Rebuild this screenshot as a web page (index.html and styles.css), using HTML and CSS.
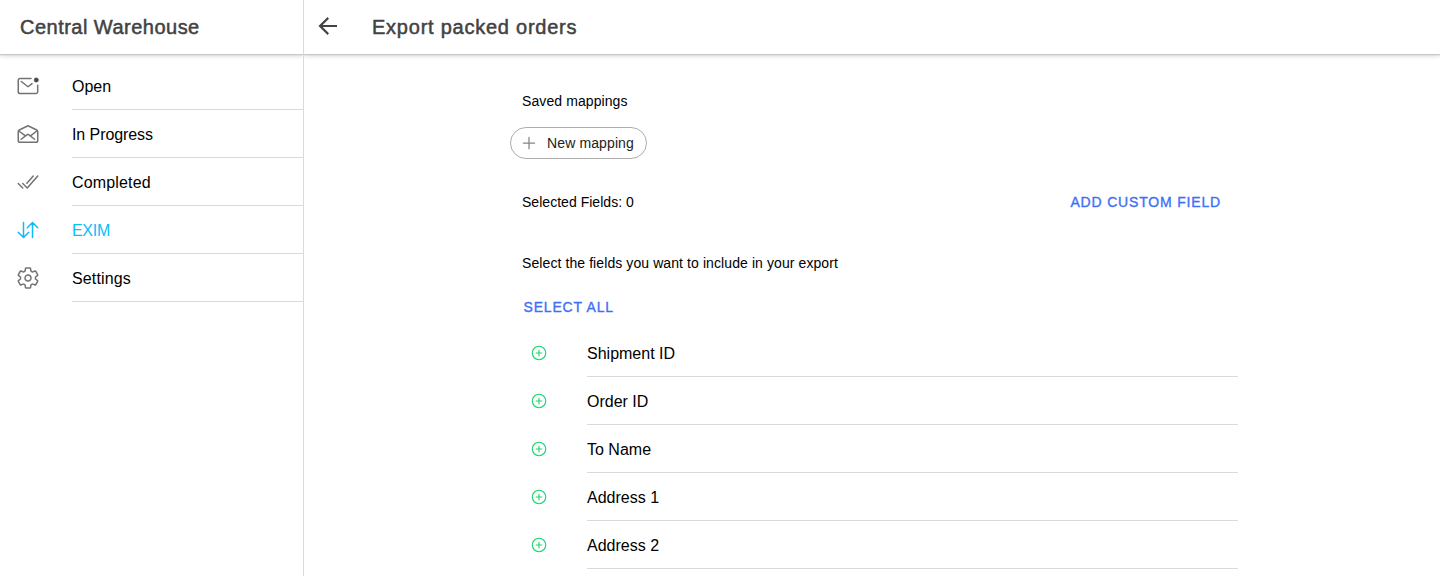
FILE: index.html
```html
<!DOCTYPE html>
<html lang="en">
<head>
<meta charset="utf-8">
<title>Export packed orders</title>
<link rel="stylesheet" href="styles.css">
</head>
<body>
<svg class="symbols" aria-hidden="true">
  <symbol id="add-circle" viewBox="0 0 512 512"><path d="M448 256c0-106-86-192-192-192S64 150 64 256s86 192 192 192 192-86 192-192zM336 256H176M256 176v160"/></symbol>
</svg>
<div class="app">
  <aside class="sidebar">
    <header class="toolbar"><h1 class="title">Central Warehouse</h1></header>
    <nav class="menu">
      <a class="menu-item"><svg class="icon" viewBox="0 0 512 512"><path d="M320 96H88a40 40 0 00-40 40v240a40 40 0 0040 40h334.73a40 40 0 0040-40V239"/><path d="M112 160l144 112 87-65.67"/><circle class="dot" cx="431.95" cy="128.05" r="47.95"/></svg><span class="label">Open</span></a>
      <a class="menu-item"><svg class="icon" viewBox="0 0 512 512"><path d="M441.6 171.61L266.87 85.37a24.57 24.57 0 00-21.74 0L70.4 171.61A40 40 0 0048 207.39V392c0 22.09 18.14 40 40.52 40h335c22.38 0 40.52-17.91 40.52-40V207.39a40 40 0 00-22.44-35.78z"/><path d="M397.33 368L268.07 267.46a24 24 0 00-29.47 0L109.33 368M309.33 295l136-103M61.33 192l139 105"/></svg><span class="label tight">In Progress</span></a>
      <a class="menu-item"><svg class="icon" viewBox="0 0 512 512"><path d="M464 128L240 384l-96-96M144 384l-96-96M368 128L232 284"/></svg><span class="label loose">Completed</span></a>
      <a class="menu-item active"><svg class="icon" viewBox="0 0 512 512"><path d="M464 208L352 96 240 208M352 113.13V416M48 304l112 112 112-112M160 398V96"/></svg><span class="label tighter">EXIM</span></a>
      <a class="menu-item"><svg class="icon" viewBox="0 0 512 512"><path d="M262.29 192.31a64 64 0 1057.4 57.4 64.13 64.13 0 00-57.4-57.4zM416.39 256a154.34 154.34 0 01-1.53 20.79l45.21 35.46a10.81 10.81 0 012.45 13.75l-42.77 74a10.81 10.81 0 01-13.14 4.59l-44.9-18.08a16.11 16.11 0 00-15.17 1.75A164.48 164.48 0 01325 400.8a15.94 15.94 0 00-8.82 12.14l-6.73 47.89a11.08 11.08 0 01-10.68 9.17h-85.54a11.11 11.11 0 01-10.69-8.87l-6.72-47.82a16.07 16.07 0 00-9-12.22 155.3 155.3 0 01-21.46-12.57 16 16 0 00-15.11-1.71l-44.89 18.07a10.81 10.81 0 01-13.14-4.58l-42.77-74a10.8 10.8 0 012.45-13.75l38.21-30a16.05 16.05 0 006-14.08c-.36-4.17-.58-8.33-.58-12.5s.21-8.27.58-12.35a16 16 0 00-6.07-13.94l-38.19-30A10.81 10.81 0 0149.48 186l42.77-74a10.81 10.81 0 0113.14-4.59l44.9 18.08a16.11 16.11 0 0015.17-1.75A164.48 164.48 0 01187 111.2a15.94 15.94 0 008.82-12.14l6.73-47.89A11.08 11.08 0 01213.23 42h85.54a11.11 11.11 0 0110.69 8.87l6.72 47.82a16.07 16.07 0 009 12.22 155.3 155.3 0 0121.46 12.57 16 16 0 0015.11 1.71l44.89-18.07a10.81 10.81 0 0113.14 4.58l42.77 74a10.8 10.8 0 01-2.45 13.75l-38.21 30a16.05 16.05 0 00-6.05 14.08c.33 4.14.55 8.3.55 12.47z"/></svg><span class="label loose">Settings</span></a>
    </nav>
  </aside>
  <main class="page">
    <header class="toolbar">
      <svg class="back" viewBox="0 0 512 512"><path d="M244 400L100 256l144-144M120 256h292"/></svg>
      <h1 class="title">Export packed orders</h1>
    </header>
    <section class="content">
      <p class="caption">Saved mappings</p>
      <button class="chip"><svg class="chip-icon" viewBox="0 0 512 512"><path d="M256 112v288M400 256H112"/></svg><span>New mapping</span></button>
      <div class="row"><p class="caption">Selected Fields: 0</p><button class="link add">Add custom field</button></div>
      <p class="caption">Select the fields you want to include in your export</p>
      <button class="link all">Select all</button>
      <div class="fields">
        <div class="field"><svg class="plus"><use href="#add-circle"/></svg><span class="field-name">Shipment ID</span></div>
        <div class="field"><svg class="plus"><use href="#add-circle"/></svg><span class="field-name">Order ID</span></div>
        <div class="field"><svg class="plus"><use href="#add-circle"/></svg><span class="field-name">To Name</span></div>
        <div class="field"><svg class="plus"><use href="#add-circle"/></svg><span class="field-name">Address 1</span></div>
        <div class="field"><svg class="plus"><use href="#add-circle"/></svg><span class="field-name">Address 2</span></div>
      </div>
    </section>
  </main>
</div>
</body>
</html>
```
FILE: styles.css
```css
* { box-sizing: border-box; }
body {
  margin: 0;
  background: #fff;
  color: #000;
  font: 16px "Liberation Sans", Arial, sans-serif;
}
svg { flex: none; fill: none; stroke: currentColor; stroke-width: 32; stroke-linecap: round; stroke-linejoin: round; }
button { padding: 0; border: 0; background: none; font: inherit; }
.symbols { display: none; }
.app { display: flex; height: 576px; overflow: hidden; }
.sidebar { width: 304px; flex: none; border-right: 1px solid #dadada; }
.page { flex: 1; }
.toolbar {
  display: flex;
  align-items: center;
  height: 54px;
  box-shadow: 0 1px 1px #c8c8c8, 0 2px 4px rgba(0, 0, 0, .17);
  clip-path: inset(0 0 -8px 0);
  color: #424242;
}
.title { margin: 0; font-size: 20px; font-weight: 400; line-height: 24px; white-space: nowrap; -webkit-text-stroke: .5px; }
.sidebar .title { padding-left: 20px; letter-spacing: .48px; }
.page .title { padding-left: 31px; letter-spacing: .76px; }
.back { width: 26px; height: 26px; margin: -2px 0 0 11px; stroke-width: 44; stroke-linecap: square; stroke-linejoin: miter; }
.menu { padding-top: 8px; }
.menu-item { display: flex; align-items: center; height: 48px; padding-left: 16px; }
.icon { width: 24px; height: 24px; color: #737373; }
.dot { fill: #444; stroke: #737373; stroke-width: 10; }
.label, .field-name {
  flex: 1;
  height: 48px;
  border-bottom: 1px solid #dadada;
  line-height: 50px;
}
.label { margin-left: 32px; }
.tight { letter-spacing: -.08px; }
.tighter { letter-spacing: -.3px; }
.loose { letter-spacing: .15px; }
.active, .active .icon { color: #0cbcfb; }
.content { width: 728px; margin: 38px 0 0 206px; }
.caption { margin: 0 0 0 12px; font-size: 14px; line-height: 18px; letter-spacing: .09px; }
.row .caption { letter-spacing: .03px; }
.chip {
  display: flex;
  align-items: center;
  width: 137px;
  height: 32px;
  margin-top: 17px;
  padding-left: 8px;
  border: 1px solid #adadad;
  border-radius: 16px;
  color: #222;
  font-size: 14px;
  letter-spacing: .12px;
  white-space: nowrap;
}
.chip-icon { width: 20px; height: 20px; margin-right: 8px; color: #858585; }
.row { display: flex; justify-content: space-between; align-items: center; height: 36px; margin: 25px 17px 34px 0; }
.link { color: #3d70f6; font-size: 14px; line-height: 36px; letter-spacing: .82px; text-transform: uppercase; white-space: nowrap; -webkit-text-stroke: .35px; }
.all { display: block; margin: 17px 0 4px 13.5px; }
.field { display: flex; align-items: center; height: 48px; padding-left: 20px; }
.plus { width: 18px; height: 18px; color: #22d36f; }
.field-name { margin-left: 39px; }
```
